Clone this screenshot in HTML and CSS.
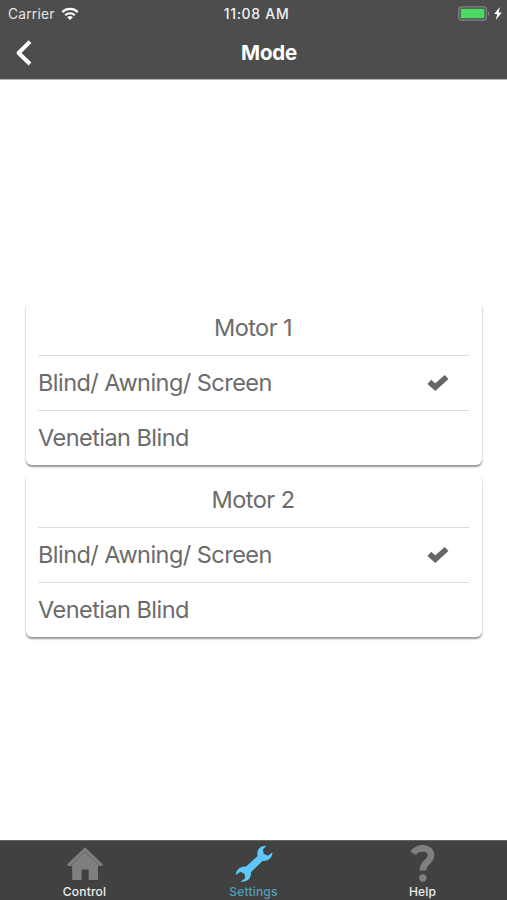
FILE: index.html
```html
<!DOCTYPE html>
<html lang="en">
<head>
<meta charset="utf-8">
<title>Mode</title>
<link rel="stylesheet" href="styles.css">
</head>
<body>
<div class="app">
  <header class="header">
    <div class="status">
      <div class="status-left">
        <span>Carrier</span>
        <svg class="wifi" viewBox="0 0 18 13"><g fill="none" stroke="currentColor" stroke-width="2.2"><path d="M1.3 5.1a11 11 0 0 1 15.4 0"/><path d="M4.2 8.2a6.9 6.9 0 0 1 9.6 0"/></g><path fill="currentColor" d="M6.2 10.2a4.2 4.2 0 0 1 5.6 0L9 13z"/></svg>
      </div>
      <span class="time">11:08 AM</span>
      <div class="power">
        <svg class="battery" viewBox="0 0 32 15"><rect x=".8" y=".8" width="27.6" height="13.4" rx="3" fill="none" stroke="#858585" stroke-width="1.3"/><rect x="2.7" y="2.8" width="23.8" height="9.4" rx="1" fill="#4cd964"/><path d="M30 5q2 2.5 0 5z" fill="#929292"/></svg>
        <svg class="bolt" viewBox="0 0 8 13"><path fill="#fff" d="M5.8 0 .2 7h3L1.8 13 7.8 5.5H4.7z"/></svg>
      </div>
    </div>
    <div class="nav">
      <svg class="back" viewBox="0 0 18 28"><path d="M15 2.6 3.6 14 15 25" fill="none" stroke="#fff" stroke-width="4" stroke-linecap="butt" stroke-linejoin="round"/></svg>
      <h1 class="title">Mode</h1>
    </div>
  </header>
  <main class="content">
    <section class="card">
      <h2 class="row heading">Motor 1</h2>
      <div class="row"><span>Blind/ Awning/ Screen</span><svg class="check" viewBox="0 0 22 17"><path d="M2.3 7.8 8.3 13.2 19.6 3" fill="none" stroke="currentColor" stroke-width="5.6" stroke-linejoin="miter"/></svg></div>
      <div class="row"><span>Venetian Blind</span></div>
    </section>
    <section class="card">
      <h2 class="row heading">Motor 2</h2>
      <div class="row"><span>Blind/ Awning/ Screen</span><svg class="check" viewBox="0 0 22 17"><path d="M2.3 7.8 8.3 13.2 19.6 3" fill="none" stroke="currentColor" stroke-width="5.6" stroke-linejoin="miter"/></svg></div>
      <div class="row"><span>Venetian Blind</span></div>
    </section>
  </main>
  <nav class="tabs">
    <div class="tab">
      <svg class="icon" viewBox="0 0 38 38"><path fill="#7f7f7f" d="M19 2.2 37 19.5 35.8 21H32v14H22.6V24.5h-7V35H6.2V21H2.4L1 19.5z"/><path d="M4.6 20.3 19 6.9l14.6 13.4" fill="none" stroke="#696969" stroke-width="1"/></svg>
      <span>Control</span>
    </div>
    <div class="tab active">
      <svg class="icon" viewBox="0 0 38 38"><path fill="#5cc8fb" d="M31.3.8C25.5.4 21.2 4.6 22.6 11L11.1 21.6C5.3 21 .9 24.8.8 30l4.7-3.2 4.2 2.1.3 4.5-4.5 3c6 1.4 11.2-3 10.4-9.2L27.5 16c5.8.8 10.3-3.5 9.9-8.8l-4.5 3.6-4.4-2-.5-4.6z"/></svg>
      <span>Settings</span>
    </div>
    <div class="tab">
      <svg class="icon" viewBox="0 0 38 38"><path d="M9.2 8.4C13 1.2 27 1.6 27 10.2c0 6.6-8.2 7-8.2 15.2" fill="none" stroke="#7f7f7f" stroke-width="6.6"/><circle cx="18.8" cy="33" r="3.7" fill="#7f7f7f"/></svg>
      <span>Help</span>
    </div>
  </nav>
</div>
</body>
</html>
```

FILE: styles.css
```css
* { box-sizing: border-box; }

body {
  margin: 0;
  background: #fff;
  font-family: Inter, "Liberation Sans", sans-serif;
}

.app {
  display: flex;
  flex-direction: column;
  height: 900px;
}

.header {
  height: 79px;
  flex: none;
  background: #4d4d4d;
  color: #fff;
  box-shadow: 0 1px 0 #b5b5b5;
}

.status {
  display: grid;
  grid-template-columns: 1fr auto 1fr;
  align-items: center;
  height: 27px;
  padding: 0 5px 0 8px;
  font-size: 13.8px;
  color: #f2f2f2;
}

.status-left {
  display: flex;
  align-items: center;
  gap: 6px;
  color: #e4e4e4;
  letter-spacing: .2px;
}

.wifi { width: 18px; height: 13px; color: #fff; }

.time { font-size: 14px; font-weight: 500; letter-spacing: .7px; padding-left: 3px; }

.power {
  display: flex;
  justify-content: flex-end;
  align-items: center;
  gap: 4px;
}

.battery { width: 32px; height: 15px; }
.bolt { width: 8px; height: 13px; }

.nav {
  display: grid;
  grid-template-columns: 48px 1fr 17px;
  align-items: center;
  height: 51px;
}

.back { width: 18px; height: 28px; margin-left: 15px; }

.title {
  margin: 0;
  text-align: center;
  font-size: 20.5px;
  line-height: 28px;
  font-weight: 650;
  letter-spacing: -.2px;
}

.content {
  flex: 1;
  display: flex;
  flex-direction: column;
  justify-content: center;
  gap: 8px;
  padding: 18px 25px 0 26px;
}

.card {
  height: 164px;
  padding: 0 13px 0 12px;
  border-radius: 6px;
  background: #fff;
  box-shadow: 0 2px 2px rgba(0, 0, 0, .42);
  clip-path: inset(5px -4px -5px);
}

.row {
  display: flex;
  align-items: center;
  justify-content: space-between;
  height: 55px;
  margin: 0;
  border-bottom: 1px solid #dcdcdc;
  padding-right: 20px;
  color: #6b6b6b;
  font-size: 23.5px;
  letter-spacing: -.54px;
  font-weight: 400;
}

.row:last-child { height: 54px; border-bottom: 0; }

.heading { justify-content: center; padding-right: 1px; }

.check { width: 22px; height: 17px; color: #666; }

.tabs {
  display: grid;
  grid-template-columns: repeat(3, 1fr);
  flex: none;
  height: 60px;
  background: #414141;
  border-top: 1px solid #666;
}

.tab {
  display: flex;
  flex-direction: column;
  align-items: center;
  padding-top: 4px;
  color: #eee;
  font-size: 12px;
  line-height: 14px;
  font-weight: 500;
  letter-spacing: .2px;
}

.tab span { margin-top: 2px; }

.icon { width: 38px; height: 38px; }

.active { color: #549fbc; }
```
